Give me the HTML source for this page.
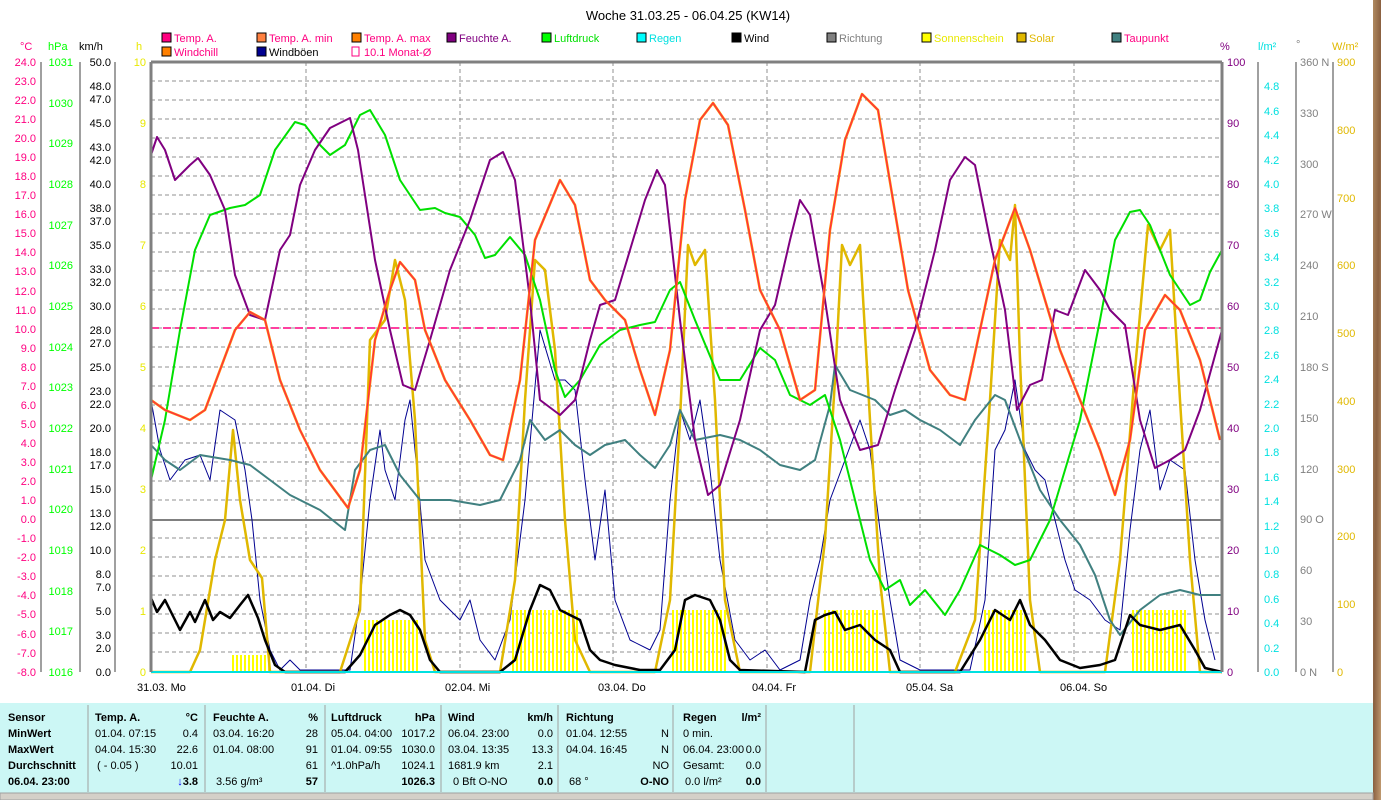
<!DOCTYPE html>
<html><head><meta charset="utf-8"><style>
html,body{margin:0;padding:0;background:#fff;width:1381px;height:800px;overflow:hidden}
svg{display:block;font-family:"Liberation Sans",sans-serif;font-size:11px}
</style></head><body>
<svg width="1381" height="800" viewBox="0 0 1381 800">
<defs>
<linearGradient id="br" x1="0" x2="1" y1="0" y2="1"><stop offset="0" stop-color="#b08a60"/><stop offset="0.5" stop-color="#8a6040"/><stop offset="1" stop-color="#c09a70"/></linearGradient>
<pattern id="sun" width="4" height="80" patternUnits="userSpaceOnUse"><rect x="0" y="0" width="2" height="80" fill="#ffff00"/></pattern>
</defs>
<rect x="1373" y="0" width="8" height="800" fill="url(#br)"/>
<text x="688" y="20" text-anchor="middle" font-size="13">Woche 31.03.25 - 06.04.25 (KW14)</text>
<!-- legend -->
<g font-size="11">
<rect x="162" y="33" width="9" height="9" fill="#ff0080" stroke="#000"/><text x="174" y="42" fill="#ff0080">Temp. A.</text>
<rect x="257" y="33" width="9" height="9" fill="#ff8040" stroke="#000"/><text x="269" y="42" fill="#ff0080">Temp. A. min</text>
<rect x="352" y="33" width="9" height="9" fill="#ff8000" stroke="#000"/><text x="364" y="42" fill="#ff0080">Temp. A. max</text>
<rect x="447" y="33" width="9" height="9" fill="#800080" stroke="#000"/><text x="459" y="42" fill="#800080">Feuchte A.</text>
<rect x="542" y="33" width="9" height="9" fill="#00ff00" stroke="#000"/><text x="554" y="42" fill="#00e000">Luftdruck</text>
<rect x="637" y="33" width="9" height="9" fill="#00ffff" stroke="#000"/><text x="649" y="42" fill="#00e0e0">Regen</text>
<rect x="732" y="33" width="9" height="9" fill="#000" stroke="#000"/><text x="744" y="42">Wind</text>
<rect x="827" y="33" width="9" height="9" fill="#808080" stroke="#000"/><text x="839" y="42" fill="#808080">Richtung</text>
<rect x="922" y="33" width="9" height="9" fill="#ffff00" stroke="#000"/><text x="934" y="42" fill="#e8e800">Sonnenschein</text>
<rect x="1017" y="33" width="9" height="9" fill="#e0b800" stroke="#000"/><text x="1029" y="42" fill="#e0b800">Solar</text>
<rect x="1112" y="33" width="9" height="9" fill="#408080" stroke="#000"/><text x="1124" y="42" fill="#ff0080">Taupunkt</text>
<rect x="162" y="47" width="9" height="9" fill="#ff8000" stroke="#000"/><text x="174" y="56" fill="#ff0080">Windchill</text>
<rect x="257" y="47" width="9" height="9" fill="#000090" stroke="#000"/><text x="269" y="56">Windböen</text>
<rect x="352" y="47" width="7" height="9" fill="none" stroke="#ff0080"/><text x="364" y="56" fill="#ff0080">10.1 Monat-Ø</text>
</g>
<!-- axis headers -->
<text x="20" y="50" fill="#ff0080">°C</text>
<text x="48" y="50" fill="#00ff00">hPa</text>
<text x="79" y="50">km/h</text>
<text x="136" y="50" fill="#e8e800">h</text>
<text x="1220" y="50" fill="#800080">%</text>
<text x="1258" y="50" fill="#00e0e0">l/m²</text>
<text x="1296" y="48" fill="#808080">°</text>
<text x="1332" y="50" fill="#e0b800">W/m²</text>
<!-- left axis lines -->
<g stroke="#808080" stroke-width="1.5">
<line x1="41" y1="62" x2="41" y2="672"/><line x1="80" y1="62" x2="80" y2="672"/><line x1="115" y1="62" x2="115" y2="672"/>
<line x1="1258" y1="62" x2="1258" y2="672"/><line x1="1296" y1="62" x2="1296" y2="672"/><line x1="1333" y1="62" x2="1333" y2="672"/>
</g>
<!-- °C -->
<g fill="#ff0080" text-anchor="end">
<text x="36" y="66">24.0</text><text x="36" y="85">23.0</text><text x="36" y="104">22.0</text><text x="36" y="123">21.0</text><text x="36" y="142">20.0</text><text x="36" y="161">19.0</text><text x="36" y="180">18.0</text><text x="36" y="199">17.0</text><text x="36" y="218">16.0</text><text x="36" y="237">15.0</text><text x="36" y="256">14.0</text><text x="36" y="275">13.0</text><text x="36" y="295">12.0</text><text x="36" y="314">11.0</text><text x="36" y="333">10.0</text><text x="36" y="352">9.0</text><text x="36" y="371">8.0</text><text x="36" y="390">7.0</text><text x="36" y="409">6.0</text><text x="36" y="428">5.0</text><text x="36" y="447">4.0</text><text x="36" y="466">3.0</text><text x="36" y="485">2.0</text><text x="36" y="504">1.0</text><text x="36" y="523">0.0</text><text x="36" y="542">-1.0</text><text x="36" y="561">-2.0</text><text x="36" y="580">-3.0</text><text x="36" y="599">-4.0</text><text x="36" y="618">-5.0</text><text x="36" y="638">-6.0</text><text x="36" y="657">-7.0</text><text x="36" y="676">-8.0</text>
</g>
<!-- hPa -->
<g fill="#00ff00" text-anchor="end">
<text x="73" y="66">1031</text><text x="73" y="107">1030</text><text x="73" y="147">1029</text><text x="73" y="188">1028</text><text x="73" y="229">1027</text><text x="73" y="269">1026</text><text x="73" y="310">1025</text><text x="73" y="351">1024</text><text x="73" y="391">1023</text><text x="73" y="432">1022</text><text x="73" y="473">1021</text><text x="73" y="513">1020</text><text x="73" y="554">1019</text><text x="73" y="595">1018</text><text x="73" y="635">1017</text><text x="73" y="676">1016</text>
</g>
<!-- km/h -->
<g text-anchor="end">
<text x="111" y="66">50.0</text><text x="111" y="90">48.0</text><text x="111" y="103">47.0</text><text x="111" y="127">45.0</text><text x="111" y="151">43.0</text><text x="111" y="164">42.0</text><text x="111" y="188">40.0</text><text x="111" y="212">38.0</text><text x="111" y="225">37.0</text><text x="111" y="249">35.0</text><text x="111" y="273">33.0</text><text x="111" y="286">32.0</text><text x="111" y="310">30.0</text><text x="111" y="334">28.0</text><text x="111" y="347">27.0</text><text x="111" y="371">25.0</text><text x="111" y="395">23.0</text><text x="111" y="408">22.0</text><text x="111" y="432">20.0</text><text x="111" y="456">18.0</text><text x="111" y="469">17.0</text><text x="111" y="493">15.0</text><text x="111" y="517">13.0</text><text x="111" y="530">12.0</text><text x="111" y="554">10.0</text><text x="111" y="578">8.0</text><text x="111" y="591">7.0</text><text x="111" y="615">5.0</text><text x="111" y="639">3.0</text><text x="111" y="652">2.0</text><text x="111" y="676">0.0</text>
</g>
<!-- h -->
<g fill="#e8e800" text-anchor="end">
<text x="146" y="66">10</text><text x="146" y="127">9</text><text x="146" y="188">8</text><text x="146" y="249">7</text><text x="146" y="310">6</text><text x="146" y="371">5</text><text x="146" y="432">4</text><text x="146" y="493">3</text><text x="146" y="554">2</text><text x="146" y="615">1</text><text x="146" y="676">0</text>
</g>
<!-- % -->
<g fill="#800080">
<text x="1227" y="66">100</text><text x="1227" y="127">90</text><text x="1227" y="188">80</text><text x="1227" y="249">70</text><text x="1227" y="310">60</text><text x="1227" y="371">50</text><text x="1227" y="432">40</text><text x="1227" y="493">30</text><text x="1227" y="554">20</text><text x="1227" y="615">10</text><text x="1227" y="676">0</text>
</g>
<!-- l/m2 -->
<g fill="#00e0e0">
<text x="1264" y="90">4.8</text><text x="1264" y="115">4.6</text><text x="1264" y="139">4.4</text><text x="1264" y="164">4.2</text><text x="1264" y="188">4.0</text><text x="1264" y="212">3.8</text><text x="1264" y="237">3.6</text><text x="1264" y="261">3.4</text><text x="1264" y="286">3.2</text><text x="1264" y="310">3.0</text><text x="1264" y="334">2.8</text><text x="1264" y="359">2.6</text><text x="1264" y="383">2.4</text><text x="1264" y="408">2.2</text><text x="1264" y="432">2.0</text><text x="1264" y="456">1.8</text><text x="1264" y="481">1.6</text><text x="1264" y="505">1.4</text><text x="1264" y="530">1.2</text><text x="1264" y="554">1.0</text><text x="1264" y="578">0.8</text><text x="1264" y="603">0.6</text><text x="1264" y="627">0.4</text><text x="1264" y="652">0.2</text><text x="1264" y="676">0.0</text>
</g>
<!-- degrees -->
<g fill="#808080">
<text x="1300" y="66">360 N</text><text x="1300" y="117">330</text><text x="1300" y="168">300</text><text x="1300" y="218">270 W</text><text x="1300" y="269">240</text><text x="1300" y="320">210</text><text x="1300" y="371">180 S</text><text x="1300" y="422">150</text><text x="1300" y="473">120</text><text x="1300" y="523">90 O</text><text x="1300" y="574">60</text><text x="1300" y="625">30</text><text x="1300" y="676">0 N</text>
</g>
<!-- W/m2 -->
<g fill="#e0b800">
<text x="1337" y="66">900</text><text x="1337" y="134">800</text><text x="1337" y="202">700</text><text x="1337" y="269">600</text><text x="1337" y="337">500</text><text x="1337" y="405">400</text><text x="1337" y="473">300</text><text x="1337" y="540">200</text><text x="1337" y="608">100</text><text x="1337" y="676">0</text>
</g>
<!-- grid -->
<g stroke="#909090" stroke-width="1" stroke-dasharray="4,3">
<line x1="151" x2="1222" y1="81" y2="81"/><line x1="151" x2="1222" y1="100" y2="100"/><line x1="151" x2="1222" y1="119" y2="119"/><line x1="151" x2="1222" y1="138" y2="138"/><line x1="151" x2="1222" y1="157" y2="157"/><line x1="151" x2="1222" y1="176" y2="176"/><line x1="151" x2="1222" y1="195" y2="195"/><line x1="151" x2="1222" y1="214" y2="214"/><line x1="151" x2="1222" y1="233" y2="233"/><line x1="151" x2="1222" y1="252" y2="252"/><line x1="151" x2="1222" y1="271" y2="271"/><line x1="151" x2="1222" y1="290" y2="290"/><line x1="151" x2="1222" y1="309" y2="309"/><line x1="151" x2="1222" y1="328" y2="328"/><line x1="151" x2="1222" y1="347" y2="347"/><line x1="151" x2="1222" y1="367" y2="367"/><line x1="151" x2="1222" y1="386" y2="386"/><line x1="151" x2="1222" y1="405" y2="405"/><line x1="151" x2="1222" y1="424" y2="424"/><line x1="151" x2="1222" y1="443" y2="443"/><line x1="151" x2="1222" y1="462" y2="462"/><line x1="151" x2="1222" y1="481" y2="481"/><line x1="151" x2="1222" y1="500" y2="500"/><line x1="151" x2="1222" y1="538" y2="538"/><line x1="151" x2="1222" y1="557" y2="557"/><line x1="151" x2="1222" y1="576" y2="576"/><line x1="151" x2="1222" y1="595" y2="595"/><line x1="151" x2="1222" y1="614" y2="614"/><line x1="151" x2="1222" y1="633" y2="633"/><line x1="151" x2="1222" y1="652" y2="652"/>
<line x1="306" x2="306" y1="62" y2="672"/><line x1="460" x2="460" y1="62" y2="672"/><line x1="613" x2="613" y1="62" y2="672"/><line x1="767" x2="767" y1="62" y2="672"/><line x1="920" x2="920" y1="62" y2="672"/><line x1="1074" x2="1074" y1="62" y2="672"/>
</g>
<line x1="151" x2="1222" y1="520" y2="520" stroke="#808080" stroke-width="2"/>
<!-- sunshine bars -->
<g fill="url(#sun)">
<rect x="232" y="655" width="40" height="17"/>
<rect x="364" y="620" width="56" height="52"/>
<rect x="512" y="610" width="68" height="62"/>
<rect x="672" y="610" width="56" height="62"/>
<rect x="822" y="610" width="58" height="62"/>
<rect x="982" y="610" width="46" height="62"/>
<rect x="1132" y="610" width="54" height="62"/>
</g>
<line x1="151" x2="1222" y1="328" y2="328" stroke="#ff0080" stroke-width="1.5" stroke-dasharray="8,4"/>
<g fill="none" stroke-linejoin="round">
<polyline stroke="#000090" stroke-width="1" points="151,400 160,450 170,480 185,460 200,455 210,480 220,410 235,420 245,470 252,520 260,600 270,650 280,670 290,660 300,670 350,670 360,600 370,500 380,430 385,470 395,500 405,420 410,400 418,480 425,560 440,600 450,610 460,620 470,600 480,640 495,660 510,620 525,500 540,330 555,380 565,380 575,390 585,480 595,560 605,490 615,600 630,640 650,650 660,630 670,500 680,410 690,440 700,400 710,470 720,560 735,640 750,660 765,650 780,670 800,660 810,600 820,560 830,500 845,460 860,420 870,450 880,530 890,600 900,660 920,670 970,670 985,600 995,450 1005,430 1015,380 1025,450 1035,470 1045,480 1055,520 1065,560 1075,590 1090,600 1105,620 1120,630 1130,530 1140,450 1150,410 1160,490 1170,460 1185,470 1195,560 1205,620 1215,660"/>
<polyline stroke="#e0b800" stroke-width="2.5" points="151,672 190,672 200,650 215,560 225,520 233,430 240,500 250,560 262,578 270,672 340,672 360,610 370,340 385,320 395,260 405,300 415,420 425,640 435,672 500,672 515,580 525,400 535,260 545,270 555,350 565,520 575,640 590,672 655,672 670,600 680,420 688,245 695,265 705,250 715,400 725,600 740,672 810,672 825,540 835,380 842,245 850,265 860,245 870,420 880,580 890,672 955,672 975,620 990,400 1000,240 1010,260 1015,205 1020,360 1030,600 1040,672 1105,672 1120,560 1135,370 1148,225 1160,250 1170,230 1180,400 1190,560 1200,672 1222,672"/>
<polyline stroke="#408080" stroke-width="2" points="151,445 165,460 180,470 200,455 230,460 250,465 270,480 290,495 320,510 345,530 355,470 370,450 385,445 400,475 420,500 450,500 480,505 500,500 520,460 530,420 545,440 560,430 575,445 590,455 605,445 625,440 640,455 655,468 670,445 680,410 695,440 720,435 740,440 760,450 780,465 800,470 815,460 830,405 835,365 850,390 875,400 890,415 905,410 920,420 940,430 960,445 975,420 995,395 1005,400 1020,440 1040,490 1060,520 1080,545 1095,575 1110,620 1120,635 1140,610 1160,595 1180,590 1200,595 1222,595"/>
<polyline stroke="#00e000" stroke-width="2" points="151,480 165,420 180,330 195,250 210,215 230,208 245,205 260,195 275,150 295,122 305,125 320,145 330,155 345,145 360,115 370,110 385,135 400,180 420,210 435,208 445,213 460,217 475,235 485,258 495,255 510,237 525,255 540,300 555,370 565,397 580,380 600,345 620,330 640,325 655,322 670,290 680,282 695,320 720,380 740,380 760,348 775,360 790,395 810,405 825,395 840,440 855,500 870,560 885,590 900,580 910,605 925,590 945,615 960,590 980,545 1000,555 1015,565 1030,560 1050,520 1080,420 1100,320 1115,240 1130,212 1140,210 1150,225 1170,275 1190,305 1200,300 1210,272 1222,250"/>
<polyline stroke="#800080" stroke-width="2" points="151,155 157,137 165,150 175,180 190,165 198,158 210,175 225,210 235,275 250,315 265,320 280,250 290,235 300,185 315,150 330,128 350,118 358,150 375,260 390,330 403,385 415,390 430,340 450,270 470,220 490,160 503,152 515,180 530,300 540,400 560,415 575,400 590,340 600,305 615,300 630,250 645,200 657,170 665,185 680,320 695,440 708,495 720,485 740,420 760,330 775,305 790,240 800,200 810,215 825,300 840,400 860,450 878,445 895,390 915,330 935,250 950,180 965,157 975,165 990,240 1005,310 1017,410 1030,385 1042,380 1055,310 1068,315 1085,270 1100,290 1110,310 1125,325 1140,420 1155,468 1170,460 1185,450 1200,410 1222,330"/>
<polyline stroke="#ff8000" stroke-width="2.5" points="151,400 165,410 190,420 205,410 220,370 235,330 250,312 265,320 280,380 300,430 320,470 348,508 360,470 375,340 390,290 400,262 415,280 425,330 445,380 470,420 490,455 503,460 520,380 535,240 560,180 575,205 590,280 605,300 625,320 640,370 655,415 670,350 685,200 700,120 713,103 728,125 745,210 760,290 780,330 800,400 815,390 830,230 845,140 862,94 878,110 893,200 908,290 930,370 950,395 965,400 980,330 995,260 1015,208 1030,250 1045,300 1060,350 1080,400 1100,450 1115,495 1130,440 1145,330 1165,295 1180,310 1200,360 1220,440"/>
<polyline stroke="#ff2050" stroke-width="1" points="151,400 165,410 190,420 205,410 220,370 235,330 250,312 265,320 280,380 300,430 320,470 348,508 360,470 375,340 390,290 400,262 415,280 425,330 445,380 470,420 490,455 503,460 520,380 535,240 560,180 575,205 590,280 605,300 625,320 640,370 655,415 670,350 685,200 700,120 713,103 728,125 745,210 760,290 780,330 800,400 815,390 830,230 845,140 862,94 878,110 893,200 908,290 930,370 950,395 965,400 980,330 995,260 1015,208 1030,250 1045,300 1060,350 1080,400 1100,450 1115,495 1130,440 1145,330 1165,295 1180,310 1200,360 1220,440"/>
<polyline stroke="#000" stroke-width="2.5" points="151,598 157,612 165,600 180,630 190,612 195,622 205,600 213,620 220,612 230,618 240,605 248,595 258,618 265,640 275,665 285,672 345,672 360,655 375,625 390,615 400,610 410,615 420,630 430,660 440,672 500,672 515,660 530,610 540,585 550,590 560,610 580,620 590,650 600,660 615,665 640,670 660,670 675,650 685,600 695,595 710,600 720,620 730,660 740,670 805,672 815,620 825,615 835,612 845,630 860,625 875,640 890,650 900,672 960,672 980,640 995,610 1010,620 1020,600 1030,625 1045,640 1060,660 1080,668 1100,665 1115,660 1130,615 1140,625 1160,630 1180,625 1195,650 1205,668 1222,672"/>
</g>
<line x1="151" x2="1222" y1="672" y2="672" stroke="#00e0e0" stroke-width="2"/>
<g stroke="#808080" stroke-width="3"><line x1="151" y1="62" x2="1222" y2="62"/><line x1="151" y1="62" x2="151" y2="672"/><line x1="1222" y1="62" x2="1222" y2="672"/></g>
<g>
<text x="137" y="691">31.03.  Mo</text><text x="291" y="691">01.04.  Di</text><text x="445" y="691">02.04.  Mi</text><text x="598" y="691">03.04.  Do</text><text x="752" y="691">04.04.  Fr</text><text x="906" y="691">05.04.  Sa</text><text x="1060" y="691">06.04.  So</text>
</g>
<rect x="0" y="703" width="1373" height="90" fill="#ccf7f5"/>
<g stroke="#a0a0a0"><line x1="88" y1="705" x2="88" y2="792"/><line x1="205" y1="705" x2="205" y2="792"/><line x1="325" y1="705" x2="325" y2="792"/><line x1="441" y1="705" x2="441" y2="792"/><line x1="558" y1="705" x2="558" y2="792"/><line x1="673" y1="705" x2="673" y2="792"/><line x1="766" y1="705" x2="766" y2="792"/><line x1="854" y1="705" x2="854" y2="792"/></g>
<rect x="0" y="793" width="1373" height="7" fill="#d4d0c8" stroke="#a0a0a0"/>
<g font-size="11">
<g font-weight="bold"><text x="8" y="721">Sensor</text><text x="8" y="737">MinWert</text><text x="8" y="753">MaxWert</text><text x="8" y="769">Durchschnitt</text><text x="8" y="785">06.04. 23:00</text></g>
<text x="95" y="721" font-weight="bold">Temp. A.</text><text x="198" y="721" text-anchor="end" font-weight="bold">°C</text>
<text x="95" y="737">01.04.  07:15</text><text x="198" y="737" text-anchor="end">0.4</text>
<text x="95" y="753">04.04.  15:30</text><text x="198" y="753" text-anchor="end">22.6</text>
<text x="97" y="769">( - 0.05 )</text><text x="198" y="769" text-anchor="end">10.01</text>
<text x="198" y="785" text-anchor="end" font-weight="bold"><tspan fill="#0000ff">↓</tspan>3.8</text>
<text x="213" y="721" font-weight="bold">Feuchte A.</text><text x="318" y="721" text-anchor="end" font-weight="bold">%</text>
<text x="213" y="737">03.04.  16:20</text><text x="318" y="737" text-anchor="end">28</text>
<text x="213" y="753">01.04.  08:00</text><text x="318" y="753" text-anchor="end">91</text>
<text x="318" y="769" text-anchor="end">61</text>
<text x="216" y="785">3.56 g/m³</text><text x="318" y="785" text-anchor="end" font-weight="bold">57</text>
<text x="331" y="721" font-weight="bold">Luftdruck</text><text x="435" y="721" text-anchor="end" font-weight="bold">hPa</text>
<text x="331" y="737">05.04.  04:00</text><text x="435" y="737" text-anchor="end">1017.2</text>
<text x="331" y="753">01.04.  09:55</text><text x="435" y="753" text-anchor="end">1030.0</text>
<text x="331" y="769">^1.0hPa/h</text><text x="435" y="769" text-anchor="end">1024.1</text>
<text x="435" y="785" text-anchor="end" font-weight="bold">1026.3</text>
<text x="448" y="721" font-weight="bold">Wind</text><text x="553" y="721" text-anchor="end" font-weight="bold">km/h</text>
<text x="448" y="737">06.04.  23:00</text><text x="553" y="737" text-anchor="end">0.0</text>
<text x="448" y="753">03.04.  13:35</text><text x="553" y="753" text-anchor="end">13.3</text>
<text x="448" y="769">1681.9 km</text><text x="553" y="769" text-anchor="end">2.1</text>
<text x="453" y="785">0 Bft O-NO</text><text x="553" y="785" text-anchor="end" font-weight="bold">0.0</text>
<text x="566" y="721" font-weight="bold">Richtung</text>
<text x="566" y="737">01.04.  12:55</text><text x="669" y="737" text-anchor="end">N</text>
<text x="566" y="753">04.04.  16:45</text><text x="669" y="753" text-anchor="end">N</text>
<text x="669" y="769" text-anchor="end">NO</text>
<text x="569" y="785">68 °</text><text x="669" y="785" text-anchor="end" font-weight="bold">O-NO</text>
<text x="683" y="721" font-weight="bold">Regen</text><text x="761" y="721" text-anchor="end" font-weight="bold">l/m²</text>
<text x="683" y="737">0 min.</text>
<text x="683" y="753">06.04.  23:00</text><text x="761" y="753" text-anchor="end">0.0</text>
<text x="683" y="769">Gesamt:</text><text x="761" y="769" text-anchor="end">0.0</text>
<text x="685" y="785">0.0 l/m²</text><text x="761" y="785" text-anchor="end" font-weight="bold">0.0</text>
</g>
</svg>
</body></html>
